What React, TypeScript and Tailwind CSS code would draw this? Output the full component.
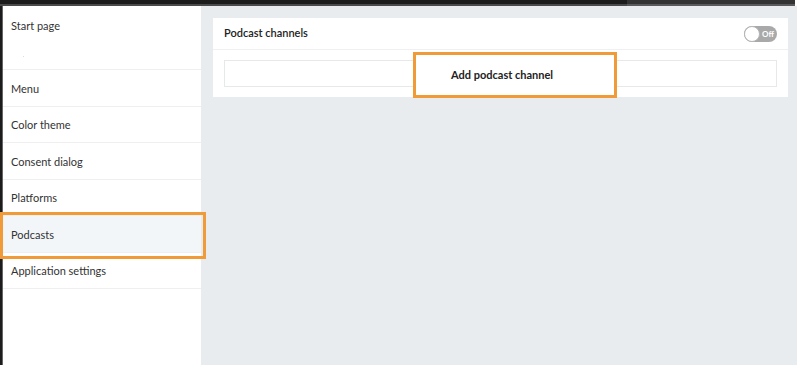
import React from "react";

const items = ["Menu", "Color theme", "Consent dialog", "Platforms", "Podcasts", "Application settings"];

export default function App() {
  return (
    <div className="w-[800px] h-[365px] flex flex-col bg-white overflow-hidden text-[#333]" style={{ fontFamily: "Lato, 'Open Sans', sans-serif" }}>
      <div className="h-[6px] flex">
        <div className="flex-1 bg-[#1c1c1c] border-b-2 border-[#4a4a4a]" />
        <div className="w-[168px] bg-[#333] border-b-2 border-[#5a5a5a]" />
        <div className="w-[5px] bg-white" />
      </div>
      <div className="flex-1 flex">
        <div className="w-[3px] bg-[#1c1c1c] border-r border-[#666]" />
        <div className="w-[198px] bg-white flex flex-col">
          <div className="h-[64px] border-b border-[#efefef] px-[8px] pt-[12px] text-[11px] relative">
            Start page
            <span className="absolute left-[20px] top-[50px] w-[1px] h-[1px] bg-[#ddd]" />
          </div>
          {items.map((t) => (
            <div
              key={t}
              className={
                "h-[36.5px] border-b border-[#efefef] px-[8px] flex items-center text-[11px] relative " +
                (t === "Podcasts" ? "bg-[#f3f6f9]" : "")
              }
            >
              <span className="translate-y-[1px]">{t}</span>
              {t === "Podcasts" && (
                <div className="absolute left-[-3px] top-[-4px] w-[206px] h-[47px] border-[3px] border-[#f19a38] pointer-events-none" />
              )}
            </div>
          ))}
        </div>
        <div className="flex-1 bg-[#e9ecee] pt-[12px] pl-[12px] pr-[9px]">
          <div className="bg-white relative">
            <div className="h-[32px] flex items-center justify-between px-[11px] border-b border-[#eef0f1]">
              <span className="text-[11px] font-semibold text-[#222]">Podcast channels</span>
              <div className="w-[33px] h-[16px] rounded-full bg-[#a9a9a9] relative flex items-center">
                <div className="w-[16px] h-[16px] rounded-full bg-white border border-[#b5b5b5]" />
                <span className="text-[8px] text-white font-bold ml-[2px]">Off</span>
              </div>
            </div>
            <div className="px-[11px] pt-[10px] pb-[10px]">
              <div className="h-[27px] border border-[#e6e8ea]" />
            </div>
            <div className="absolute left-[200px] top-[34px] w-[204px] h-[46px] border-[3px] border-[#f19a38] bg-white flex items-center pl-[35px]">
              <span className="text-[11px] font-bold text-[#222]">Add podcast channel</span>
            </div>
          </div>
        </div>
        <div className="w-[3px] bg-white" />
      </div>
    </div>
  );
}
